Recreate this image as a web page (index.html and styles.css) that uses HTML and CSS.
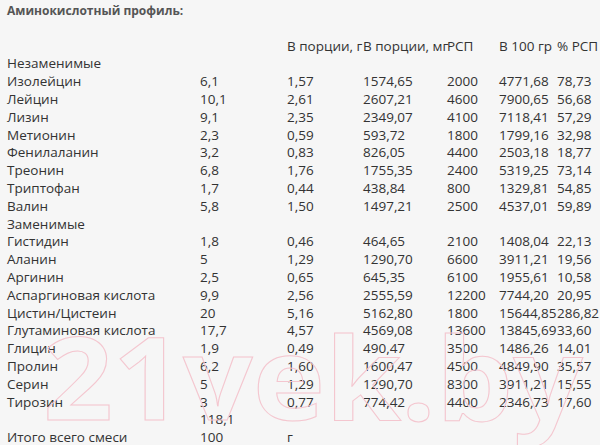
FILE: index.html
```html
<!DOCTYPE html>
<html lang="ru">
<head>
<meta charset="utf-8">
<title>Аминокислотный профиль</title>
<link rel="stylesheet" href="styles.css">
</head>
<body>
<div class="sheet">
  <div class="grid">
    <div class="title">Аминокислотный профиль:</div>
    <div class="blank"></div>

    <div></div><div></div><div>В порции, г</div><div>В порции, мг</div><div>РСП</div><div>В 100 гр</div><div>% РСП</div>

    <div class="wide">Незаменимые</div>
    <div>Изолейцин</div><div>6,1</div><div>1,57</div><div>1574,65</div><div>2000</div><div>4771,68</div><div>78,73</div>
    <div>Лейцин</div><div>10,1</div><div>2,61</div><div>2607,21</div><div>4600</div><div>7900,65</div><div>56,68</div>
    <div>Лизин</div><div>9,1</div><div>2,35</div><div>2349,07</div><div>4100</div><div>7118,41</div><div>57,29</div>
    <div>Метионин</div><div>2,3</div><div>0,59</div><div>593,72</div><div>1800</div><div>1799,16</div><div>32,98</div>
    <div>Фенилаланин</div><div>3,2</div><div>0,83</div><div>826,05</div><div>4400</div><div>2503,18</div><div>18,77</div>
    <div>Треонин</div><div>6,8</div><div>1,76</div><div>1755,35</div><div>2400</div><div>5319,25</div><div>73,14</div>
    <div>Триптофан</div><div>1,7</div><div>0,44</div><div>438,84</div><div>800</div><div>1329,81</div><div>54,85</div>
    <div>Валин</div><div>5,8</div><div>1,50</div><div>1497,21</div><div>2500</div><div>4537,01</div><div>59,89</div>
    <div class="wide">Заменимые</div>
    <div>Гистидин</div><div>1,8</div><div>0,46</div><div>464,65</div><div>2100</div><div>1408,04</div><div>22,13</div>
    <div>Аланин</div><div>5</div><div>1,29</div><div>1290,70</div><div>6600</div><div>3911,21</div><div>19,56</div>
    <div>Аргинин</div><div>2,5</div><div>0,65</div><div>645,35</div><div>6100</div><div>1955,61</div><div>10,58</div>
    <div>Аспаргиновая кислота</div><div>9,9</div><div>2,56</div><div>2555,59</div><div>12200</div><div>7744,20</div><div>20,95</div>
    <div>Цистин/Цистеин</div><div>20</div><div>5,16</div><div>5162,80</div><div>1800</div><div>15644,85</div><div>286,82</div>
    <div>Глутаминовая кислота</div><div>17,7</div><div>4,57</div><div>4569,08</div><div>13600</div><div>13845,69</div><div>33,60</div>
    <div>Глицин</div><div>1,9</div><div>0,49</div><div>490,47</div><div>3500</div><div>1486,26</div><div>14,01</div>
    <div>Пролин</div><div>6,2</div><div>1,60</div><div>1600,47</div><div>4500</div><div>4849,90</div><div>35,57</div>
    <div>Серин</div><div>5</div><div>1,29</div><div>1290,70</div><div>8300</div><div>3911,21</div><div>15,55</div>
    <div>Тирозин</div><div>3</div><div>0,77</div><div>774,42</div><div>4400</div><div>2346,73</div><div>17,60</div>
    <div></div><div class="from-2">118,1</div>
    <div>Итого всего смеси</div><div>100</div><div class="from-3">г</div>
  </div>
  <svg class="watermark" width="570" height="150" viewBox="0 0 570 150" aria-hidden="true">
    <text x="2" y="106" textLength="540" lengthAdjust="spacingAndGlyphs">21vek.by</text>
  </svg>
</div>
</body>
</html>
```

FILE: styles.css
```css
html, body {
  margin: 0;
  padding: 0;
  background: #f6f6f6;
}

body {
  padding: 2px 0 0 7px;
  font-family: "Open Sans", "Liberation Sans", sans-serif;
  font-size: 13.5px;
  color: #333;
  overflow: hidden;
}

.sheet {
  position: relative;
}

.grid {
  display: grid;
  grid-template-columns: 193px 87px 76px 84px 52px 58px 1fr;
  grid-auto-rows: 17.8px;
  line-height: 17.8px;
  white-space: nowrap;
}

.grid > div {
  min-width: 0;
  overflow: visible;
}

.title {
  grid-column: 1 / -1;
  font-size: 12px;
  font-weight: 700;
  color: #555;
}

.blank,
.wide {
  grid-column: 1 / -1;
}

.from-2 {
  grid-column: 2 / -1;
}

.from-3 {
  grid-column: 3 / -1;
}

.watermark {
  position: absolute;
  left: 34px;
  top: 312px;
  pointer-events: none;
}

.watermark text {
  font-family: "Open Sans", "Liberation Sans", sans-serif;
  font-weight: 700;
  font-size: 114px;
  fill: none;
  stroke: #f4c6cf;
  stroke-width: 1;
}
```
